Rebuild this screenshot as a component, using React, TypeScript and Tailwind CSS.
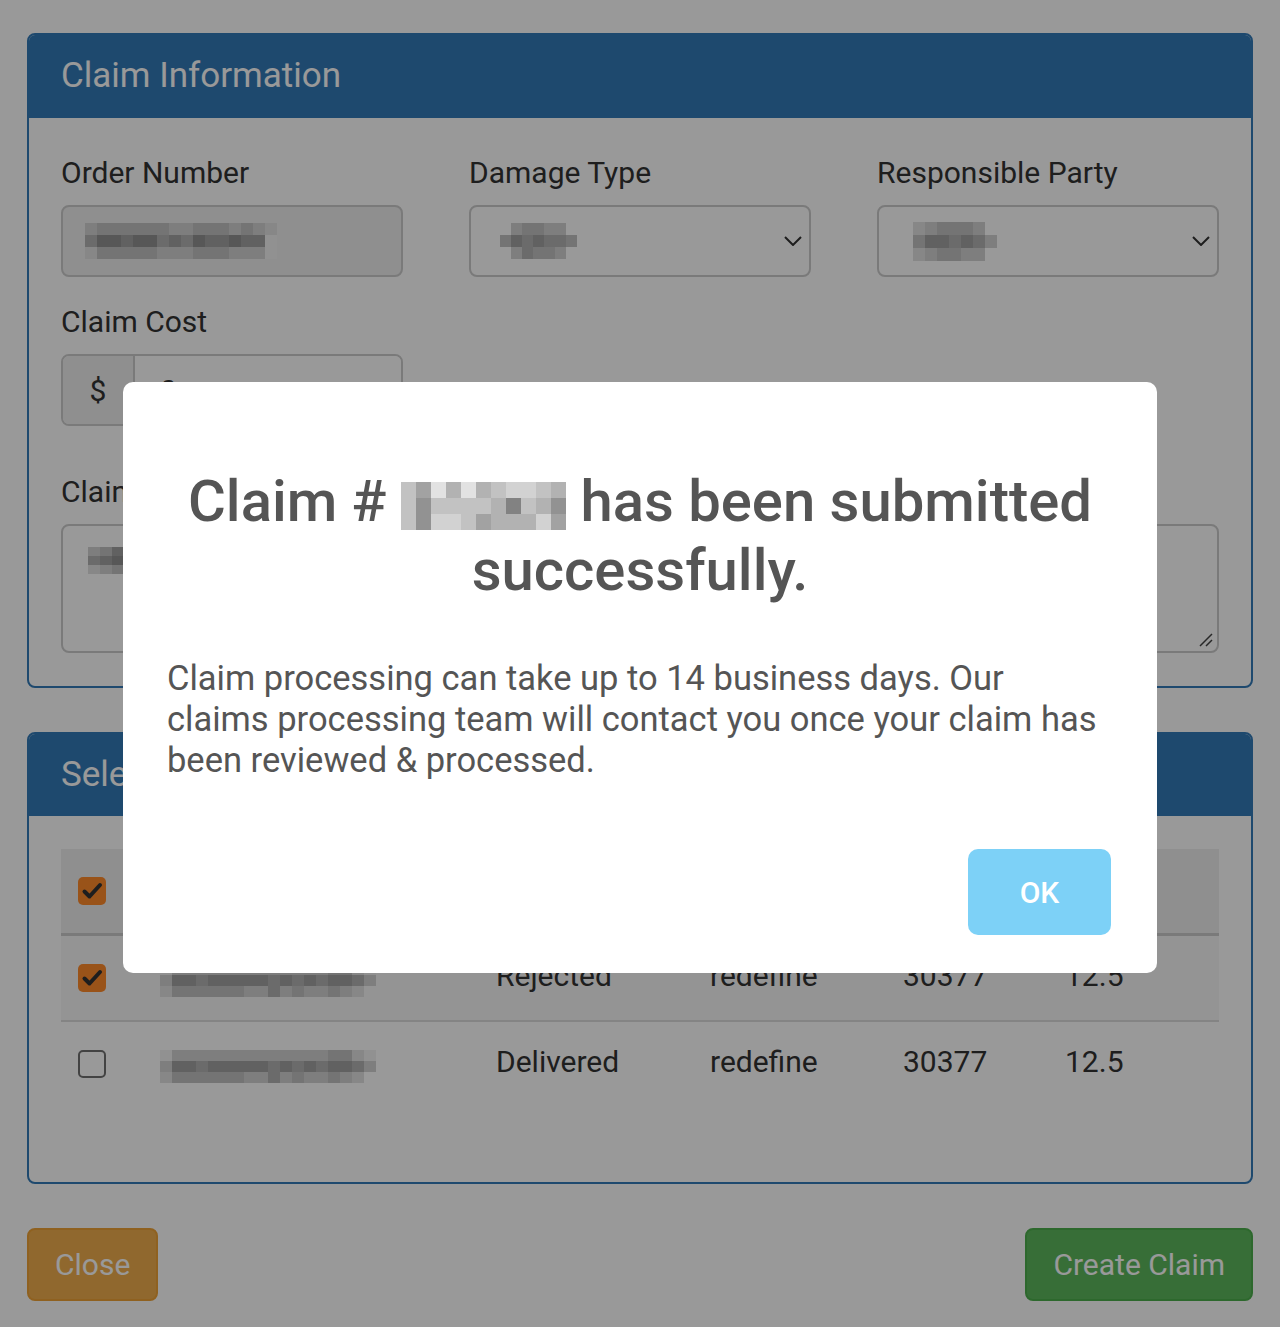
import React from "react";

// shades used for the pixelated (redacted) bits
const P: Record<string, string> = {
  "0": "bg-transparent",
  "1": "bg-[#f2f2f2]",
  "2": "bg-[#e2e2e2]",
  "3": "bg-[#d2d2d2]",
  "4": "bg-[#c2c2c2]",
  "5": "bg-[#b2b2b2]",
  "6": "bg-[#a2a2a2]",
  "7": "bg-[#929292]",
  "8": "bg-[#828282]",
  "9": "bg-[#727272]",
};

const Mosaic = ({ rows, cell }: { rows: string[]; cell: string }) => (
  <span className="inline-flex flex-col align-middle">
    {rows.map((r, i) => (
      <span key={i} className="flex">
        {r.split("").map((c, j) => (
          <span key={j} className={`${cell} ${P[c]}`} />
        ))}
      </span>
    ))}
  </span>
);

const Chevron = () => (
  <svg width="18" height="10" viewBox="0 0 18 10" fill="none" className="absolute right-[7px] top-[29px]">
    <path d="M1 1l8 8 8-8" stroke="#333" strokeWidth="2" />
  </svg>
);

const Label = ({ children }: { children: React.ReactNode }) => (
  <div className="mb-[12px] text-[30px] leading-[40px]">{children}</div>
);

const Checkbox = ({ checked }: { checked?: boolean }) =>
  checked ? (
    <span className="flex h-[28px] w-[28px] items-center justify-center rounded-[5px] bg-[#ff8a2b]">
      <svg width="22" height="22" viewBox="0 0 22 22" fill="none">
        <path d="M3.5 11.5l5 5L19 5" stroke="#333" strokeWidth="4" strokeLinecap="round" strokeLinejoin="round" />
      </svg>
    </span>
  ) : (
    <span className="block h-[28px] w-[28px] rounded-[5px] border-2 border-[#707070] bg-white" />
  );

const ClaimInfo = () => (
  <div className="overflow-hidden rounded-lg border-2 border-[#337ab7]">
    <div className="flex h-[83px] items-center bg-[#337ab7] px-[32px] text-[35px] text-white">Claim Information</div>
    <div className="px-[32px] pt-[35px] pb-[33px]">
      <div className="grid grid-cols-3 gap-x-[66px] gap-y-[25px]">
        <div>
          <Label>Order Number</Label>
          <div className="flex h-[72px] items-center rounded-lg border-2 border-[#ccc] bg-[#eee] px-[22px]">
            <Mosaic cell="w-[12px] h-[12px]" rows={["3444444334443432", "5776775657667661", "2444443334443331"]} />
          </div>
        </div>
        <div>
          <Label>Damage Type</Label>
          <div className="relative flex h-[72px] items-center rounded-lg border-2 border-[#ccc] bg-white px-[29px]">
            <Mosaic cell="w-[11px] h-[12px]" rows={["03443300", "46565540", "03544300"]} />
            <Chevron />
          </div>
        </div>
        <div>
          <Label>Responsible Party</Label>
          <div className="relative flex h-[72px] items-center rounded-lg border-2 border-[#ccc] bg-white px-[34px]">
            <Mosaic cell="w-[12px] h-[13px]" rows={["23444300", "46656530", "23443300"]} />
            <Chevron />
          </div>
        </div>
        <div>
          <Label>Claim Cost</Label>
          <div className="flex h-[72px] overflow-hidden rounded-lg border-2 border-[#ccc]">
            <div className="flex w-[72px] items-center justify-center border-r-2 border-[#ccc] bg-[#eee] text-[30px]">$</div>
            <div className="flex flex-1 items-center bg-white px-[25px] text-[30px]">0</div>
          </div>
        </div>
      </div>
      <div className="mt-[46px]">
        <Label>Claim Description</Label>
        <div className="relative h-[129px] rounded-lg border-2 border-[#ccc] bg-white px-[25px] pt-[21px]">
          <Mosaic cell="w-[12px] h-[9px]" rows={["3463", "5676", "2343"]} />
          <svg width="14" height="14" viewBox="0 0 14 14" className="absolute right-[4px] bottom-[4px]" fill="none">
            <path d="M13 1L1 13M13 7l-6 6" stroke="#444" strokeWidth="1.5" />
          </svg>
        </div>
      </div>
    </div>
  </div>
);

const cols = "grid grid-cols-[99px_336px_214px_193px_162px_1fr] items-center";

const rows = [
  { checked: true, status: "Rejected", stripe: true, h: "h-[84px]", blur: ["1333333333333344210", "3665666665656566530", "2444444335343343200"] },
  { checked: false, status: "Delivered", stripe: false, h: "h-[86px] border-t-2 border-[#ddd]", blur: ["1333333333333344210", "3665666665656566530", "2444444335343343200"] },
];

const SelectItems = () => (
  <div className="mt-[44px] overflow-hidden rounded-lg border-2 border-[#337ab7]">
    <div className="flex h-[82px] items-center bg-[#337ab7] px-[32px] text-[35px] text-white">Select Items</div>
    <div className="px-[32px] pt-[33px] pb-[76px] text-[30px]">
      <div className={`${cols} h-[87px] border-b-[3px] border-[#ccc] bg-[#eee] font-bold`}>
        <div className="pl-[17px]"><Checkbox checked /></div>
        <div>Order #</div>
        <div>Status</div>
        <div>Type</div>
        <div>Zip</div>
        <div className="text-[28px]">Weight</div>
      </div>
      {rows.map((r, i) => (
        <div key={i} className={`${cols} ${r.h} pb-[6px] ${r.stripe ? "bg-[#f7f7f7]" : "bg-white"}`}>
          <div className="pl-[17px] pt-[6px]"><Checkbox checked={r.checked} /></div>
          <div className="pt-[6px]"><Mosaic cell="w-[12px] h-[11px]" rows={r.blur} /></div>
          <div>{r.status}</div>
          <div>redefine</div>
          <div>30377</div>
          <div>12.5</div>
        </div>
      ))}
    </div>
  </div>
);

const SuccessModal = () => (
  <div className="absolute left-[123px] top-[382px] w-[1034px] rounded-[10px] bg-white px-[44px] pt-[85px] pb-[38px] text-[#555]">
    <h2 className="text-center text-[58px] font-medium leading-[69px]">
      Claim # <Mosaic cell="w-[15px] h-[16px]" rows={["46252543345", "47444458457", "47334655536"]} /> has been submitted successfully.
    </h2>
    <p className="mt-[53px] text-[34.5px] leading-[41px]">
      Claim processing can take up to 14 business days. Our
      <br />
      claims processing team will contact you once your claim has
      <br />
      been reviewed &amp; processed.
    </p>
    <div className="mt-[68px] flex justify-end">
      <button className="mr-[2px] h-[86px] w-[143px] rounded-[10px] bg-[#7dd1f7] text-[30px] font-medium text-white">OK</button>
    </div>
  </div>
);

export default function App() {
  return (
    <div className="relative min-h-[1327px] bg-white font-['Roboto',sans-serif] text-[#333]">
      <div className="px-[27px] pt-[33px] pb-[27px]">
        <ClaimInfo />
        <SelectItems />
        <div className="mt-[44px] flex justify-between">
          <button className="h-[73px] rounded-lg border-2 border-[#eea236] bg-[#f0ad4e] px-[26px] text-[30px] text-white">Close</button>
          <button className="h-[73px] rounded-lg border-2 border-[#4cae4c] bg-[#5cb85c] px-[26px] text-[30px] text-white">Create Claim</button>
        </div>
      </div>
      <div className="absolute inset-0 bg-black/40" />
      <SuccessModal />
    </div>
  );
}
